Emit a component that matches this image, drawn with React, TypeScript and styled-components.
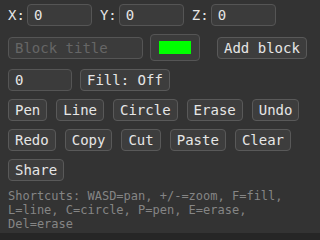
import React from "react";
import styled, { createGlobalStyle } from "styled-components";

const GlobalStyle = createGlobalStyle`
  html, body {
    margin: 0;
    padding: 0;
    background: #262626;
  }
  * { box-sizing: border-box; }
`;

const Panel = styled.div`
  background: #333333;
  padding: 4px 8px 2px 8px;
  display: flex;
  flex-direction: column;
  gap: 8px;
  font-family: "DejaVu Sans Mono", monospace;
  font-size: 14px;
  color: #e6e6e6;
`;

const Row = styled.div<{ $gap?: number }>`
  display: flex;
  align-items: center;
  gap: ${(p) => p.$gap ?? 8}px;
`;

const Group = styled.label`
  display: flex;
  align-items: center;
  gap: 2px;
  line-height: 16px;
`;

const TextInput = styled.input<{ $w: number }>`
  width: ${(p) => p.$w}px;
  height: 22px;
  padding: 2px 6px;
  border: 1px solid #555555;
  border-radius: 4px;
  background: #3b3b3b;
  color: #e6e6e6;
  font: inherit;
  outline: none;
  &::placeholder {
    color: #666666;
  }
`;

const ColorInput = styled.input`
  width: 50px;
  height: 27px;
  padding: 2px 6px;
  border: 1px solid #555555;
  border-radius: 4px;
  background: #3b3b3b;
  margin: 0 9px 0 -1px;
  &::-webkit-color-swatch {
    border: none;
  }
`;

const Button = styled.button`
  height: 22px;
  padding: 2px 6px;
  border: 1px solid #595959;
  border-radius: 4px;
  background: #3d3d3d;
  color: #e6e6e6;
  font: inherit;
  line-height: 16px;
  white-space: nowrap;
`;

const Tools = styled.div`
  display: flex;
  flex-wrap: wrap;
  gap: 8px 9px;
`;

const Help = styled.div`
  font-size: 12px;
  line-height: 14px;
  color: #858585;
`;

const tools = ["Pen", "Line", "Circle", "Erase", "Undo", "Redo", "Copy", "Cut", "Paste", "Clear", "Share"];

export default function App() {
  return (
    <>
      <GlobalStyle />
      <Panel>
        <Row>
          {["X", "Y", "Z"].map((a) => (
            <Group key={a}>
              {a}:
              <TextInput $w={65} defaultValue="0" />
            </Group>
          ))}
        </Row>
        <Row $gap={8}>
          <TextInput $w={135} placeholder="Block title" />
          <ColorInput type="color" defaultValue="#00ff00" />
          <Button>Add block</Button>
        </Row>
        <Row>
          <TextInput $w={64} defaultValue="0" />
          <Button>Fill: Off</Button>
        </Row>
        <Tools>
          {tools.map((t) => (
            <Button key={t}>{t}</Button>
          ))}
        </Tools>
        <Help>
          Shortcuts: WASD=pan, +/-=zoom, F=fill, L=line, C=circle, P=pen, E=erase, Del=erase
        </Help>
      </Panel>
    </>
  );
}
